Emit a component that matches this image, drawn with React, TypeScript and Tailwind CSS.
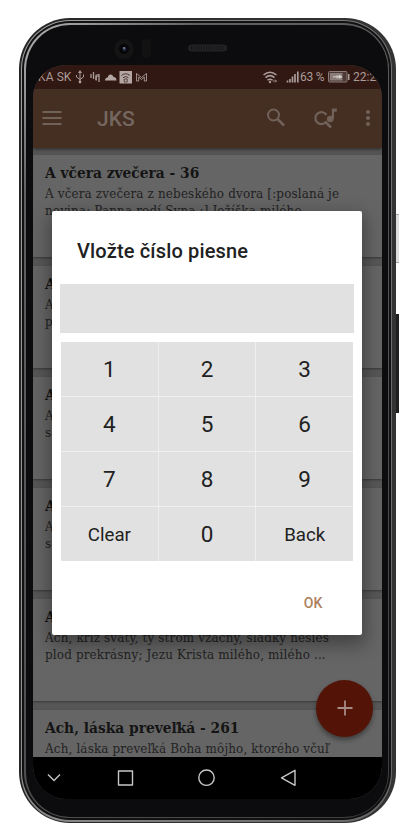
import type { ReactNode } from "react";

type Song = { title: string; lines: string[] };

const SONGS: Song[] = [
  { title: "A včera zvečera - 36", lines: ["A včera zvečera z nebeského dvora [:poslaná je", "novina: Panna rodí Syna.:] Ježíška milého,"] },
  { title: "Ach", lines: ["Ach", "po"] },
  { title: "Ach", lines: ["Ach", "sa"] },
  { title: "Ach", lines: ["Ach", "sa"] },
  { title: "Ach", lines: ["Ach, kríž svätý, ty strom vzácny, sladký nesieš", "plod prekrásny; Jezu Krista milého, milého ..."] },
  { title: "Ach, láska preveľká - 261", lines: ["Ach, láska preveľká Boha môjho, ktorého včuľ"] },
];

const KEYS = ["1", "2", "3", "4", "5", "6", "7", "8", "9", "Clear", "0", "Back"];

function Card({ song }: { song: Song }) {
  return (
    <article className="mb-[9px] h-[102px] shrink-0 bg-[#656565] pl-[12px] pt-[8px] shadow-[0_1px_2px_#383838]">
      <h2 className="h-[22px] whitespace-nowrap font-['Roboto_Slab','DejaVu_Serif_Condensed','DejaVu_Serif',serif] text-[15.3px] font-bold leading-[21px] tracking-[0.02px] text-[#141414] [font-stretch:condensed]">{song.title}</h2>
      {song.lines.map((line) => (
        <p key={line} className="h-[17.5px] whitespace-nowrap font-['Roboto_Slab','DejaVu_Serif_Condensed','DejaVu_Serif',serif] text-[13.3px] leading-[17.5px] tracking-[0.15px] text-[#222] [font-stretch:condensed]">{line}</p>
      ))}
    </article>
  );
}

function StatusBar() {
  return (
    <div className="flex h-[24px] shrink-0 items-center bg-[#321812] pl-[5px] text-[12px] text-[#a89b98]">
      <span className="w-[34px] whitespace-nowrap pt-px leading-none tracking-[0.1px]">KA SK</span>
      <svg width="76" height="16" viewBox="0 0 76 16" className="ml-[3px]" fill="none" stroke="#a89b98">
        <path d="M5 3v10M1.500 6v2L5 10.500 8.500 8V5.500" />
        <path d="M5 1 3 4h4z" fill="#a89b98" stroke="none" />
        <circle cx="5" cy="13" r="1.400" fill="#a89b98" stroke="none" />
        <path d="M16 5v4M18.500 3v7M21 7v4M23 5v3" strokeWidth="1.300" />
        <path d="M21.200 5.500v6M24 5v8" strokeWidth="1.300" />
        <path d="M30 11.500c0-2 1.300-3 2.700-3 .6-4 5-4 5.800-.5 2 0 3 1.500 3 3.500z" fill="#b3a6a3" stroke="none" />
        <path d="M44.500 2h12.500v12.500h-12.500z" fill="#b3a6a3" stroke="none" />
        <path d="M46.500 6.500q4.200-3.500 8.400 0M48 8.700q2.700-2.200 5.400 0" stroke="#4a322d" />
        <path d="M49.200 10h3v3h-3z" stroke="#4a322d" strokeWidth=".8" />
        <path d="M61.500 12V4.500l5 4 5-4V12h-2.200V8l-2.800 2.500L63.700 8v4z" strokeWidth=".9" />
      </svg>
      <svg width="38" height="16" viewBox="0 0 38 16" className="ml-auto" fill="none" stroke="#a89b98">
        <path d="M1.500 6q6.500-5.500 13 0M3.500 8.700q4.500-4 9 0M5.500 11.200q2.500-2 5 0" strokeWidth="1.600" />
        <circle cx="8" cy="13" r="1.200" fill="#a89b98" stroke="none" />
        <path d="M10.500 12h4m-1.500-1.500 1.500 1.500-1.500 1.500" strokeWidth=".8" />
        <path d="M25.500 13.500v-2M28 13.500V10M30.500 13.500V7.500M33 13.500V5M35.800 13.500V2.500" strokeWidth="1.700" />
      </svg>
      <span className="w-[28px] whitespace-nowrap pt-px leading-none tracking-[-0.2px]">63 %</span>
      <svg width="22" height="12" viewBox="0 0 22 12">
        <rect x=".5" y=".5" width="18.500" height="10.500" rx="1" fill="#4c3834" stroke="#8a7b78" />
        <path d="M2 2h12.500v7.500H2z" fill="#897c79" />
        <path d="M5 5.800h9m-5-1.500v3M11 4.300v3l3-1.500z" fill="#d5cdcb" stroke="#d5cdcb" />
        <path d="M20 3h1.500v6H20z" fill="#a89b98" />
      </svg>
      <span className="ml-[3px] w-[29px] overflow-hidden whitespace-nowrap pt-px leading-none">22:22</span>
    </div>
  );
}

function AppBar() {
  return (
    <header className="z-10 flex h-[59px] shrink-0 items-center bg-[#452e22] shadow-[0_1px_4px_#252525]">
      <svg width="20" height="16" viewBox="0 0 20 16" className="ml-[9px]" stroke="#706159" strokeWidth="2"><path d="M.5 2h19M.5 8h19M.5 14h19" /></svg>
      <h1 className="ml-[35px] w-[40px] pt-[3px] text-[21px] font-medium leading-none text-[#746760]">JKS</h1>
      <svg width="20" height="20" viewBox="0 0 20 20" className="ml-[129px]" fill="none" stroke="#706159" strokeWidth="2"><circle cx="7.500" cy="7" r="5.500" /><path d="m11.500 11 6.500 6.500" strokeWidth="2.500" /></svg>
      <svg width="26" height="23" viewBox="0 0 26 23" className="ml-[27px]" fill="none" stroke="#706159" strokeWidth="2.200">
        <path d="M13.500 8A6 6 0 1 0 13 15" />
        <path d="m12 14.500 6 6" strokeWidth="2.600" />
        <circle cx="17.200" cy="12" r="3.300" fill="#706159" stroke="none" />
        <path d="M18.800 1.500h5v3.200h-2.800V12h-2.200z" fill="#706159" stroke="none" />
      </svg>
      <svg width="6" height="18" viewBox="0 0 6 18" className="ml-[26px]" fill="#706159"><circle cx="3" cy="3" r="2.100" /><circle cx="3" cy="9" r="2.100" /><circle cx="3" cy="15" r="2.100" /></svg>
    </header>
  );
}

function NavBar() {
  return (
    <nav className="z-10 flex h-[42px] shrink-0 bg-black">
      <svg width="349" height="42" viewBox="0 0 349 42" fill="none" stroke="#c7c7c7" strokeWidth="1.400" strokeLinejoin="round">
        <path d="m15 17.500 6 6 6-6" />
        <rect x="85.500" y="14" width="14" height="14" />
        <circle cx="173.500" cy="20.700" r="7.700" />
        <path d="M262 13.300V28.300L248.500 20.800z" />
      </svg>
    </nav>
  );
}

function Dialog() {
  return (
    <section className="absolute left-[19px] top-[146px] flex h-[424px] w-[310px] flex-col rounded-[2px] bg-white text-[#212121] shadow-[0_7px_18px_3px_rgba(0,0,0,0.35)]">
      <h2 className="ml-[25px] mt-[27px] h-[26px] whitespace-nowrap text-[20px] font-medium leading-[26px] tracking-[0.16px]">Vložte číslo piesne</h2>
      <div className="ml-[8px] mt-[20px] h-[49px] w-[294px] bg-[#e1e1e1]" />
      <div className="ml-[9px] mt-[9px] grid h-[219px] w-[292px] grid-cols-3 gap-px bg-[#efefef]">
        {KEYS.map((k) => (
          <button key={k} className={`flex items-center justify-center bg-[#e1e1e1] ${k.length > 1 ? "pt-[3px] text-[18.7px]" : "pt-[2px] text-[22.5px]"}`}>{k}</button>
        ))}
      </div>
      <button className="ml-[241px] mt-[32px] h-[20px] w-[40px] text-center text-[14px] font-medium leading-[20px] text-[#ad7f5d]">OK</button>
    </section>
  );
}

function Frame({ children }: { children: ReactNode }) {
  return (
    <div className="relative ml-[19px] mt-[18px] h-[805px] w-[377px] rounded-[51px] bg-[linear-gradient(90deg,#262626,#303030_50%,#333)] p-[1.500px] pr-[4px]">
      <div className="absolute left-[377px] top-[196px] h-[49px] w-[3px] border-y border-[#aaa] bg-[#dedede]" />
      <div className="absolute left-[377px] top-[296px] h-[99px] w-[3px] bg-[#202020]" />
      <div className="h-full rounded-[49px] bg-[linear-gradient(100deg,#a0a0a0,#777_60%,#666)] p-[1.500px] pr-[1px]">
        <div className="h-full rounded-[48px] bg-[#111] p-[2px]">
          <div className="h-full rounded-[46px] bg-[linear-gradient(135deg,#b5b5b5,#606060_15%,#4a4a4a_80%,#3c3c3c)] p-[1.500px] pr-[1px]">
            <div className="h-full overflow-hidden rounded-[44px] bg-[#0c0c0e]">{children}</div>
          </div>
        </div>
      </div>
    </div>
  );
}

export default function App() {
  return (
    <main className="h-[830px] w-[420px] overflow-hidden bg-white font-['Roboto',sans-serif]">
      <Frame>
        <div className="flex h-[40px] items-center">
          <svg width="362" height="40" viewBox="0 0 362 40">
            <circle cx="98" cy="24" r="10" fill="#141414" />
            <circle cx="98" cy="24" r="5" fill="#060609" />
            <circle cx="98.500" cy="24" r="2" fill="#26304a" />
            <circle cx="98" cy="23" r="1" fill="#7b8392" />
            <rect x="116" y="14" width="9" height="19" rx="4" fill="#121212" />
            <rect x="162" y="19.500" width="39" height="7" rx="3.500" fill="#222" />
            <path d="M165 23h33" stroke="#151515" strokeWidth="4" strokeDasharray="1 1.500" />
          </svg>
        </div>
        <div className="relative ml-[7.500px] flex h-[734px] w-[349px] flex-col overflow-hidden rounded-[33px] bg-[#575757]">
          <StatusBar />
          <AppBar />
          <div className="flex min-h-0 flex-1 flex-col overflow-hidden pt-[7px]">
            {SONGS.map((s, i) => <Card key={i} song={s} />)}
          </div>
          <NavBar />
          <div className="absolute left-[283px] top-[615px] flex h-[57px] w-[57px] items-center justify-center rounded-full bg-[#531407] shadow-[0_3px_5px_rgba(0,0,0,0.4)]">
            <svg width="16" height="16" viewBox="0 0 16 16" stroke="#a58c86" strokeWidth="1.800"><path d="M8 .5v15M.5 8h15" /></svg>
          </div>
          <Dialog />
        </div>
      </Frame>
    </main>
  );
}
